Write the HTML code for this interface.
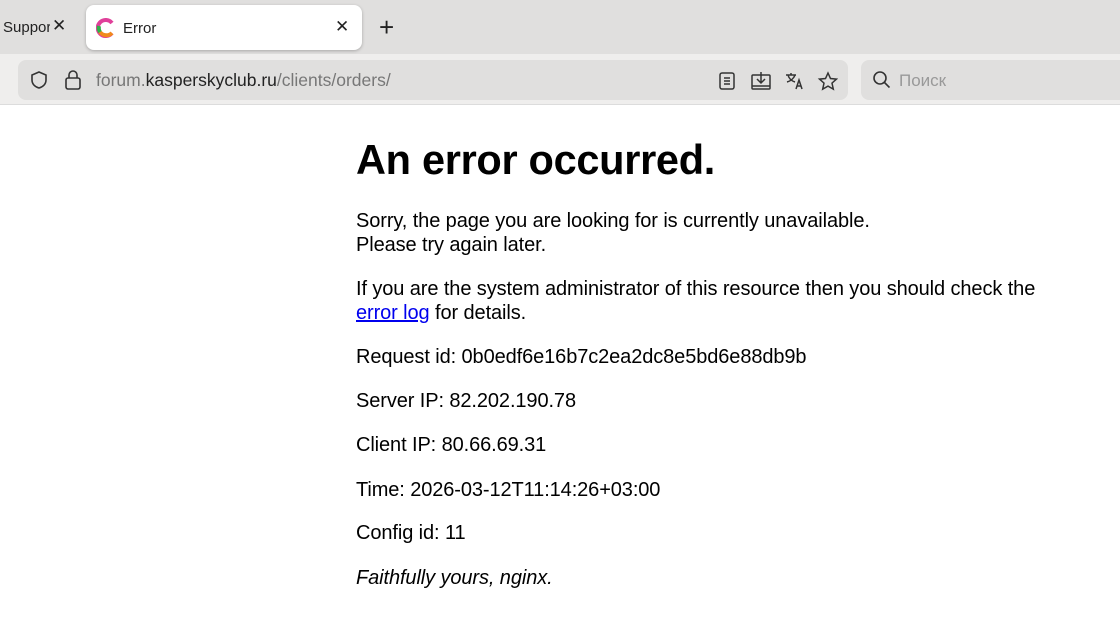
<!DOCTYPE html>
<html><head><meta charset="utf-8"><style>
body{margin:0;width:1120px;height:622px;overflow:hidden;background:#fff;font-family:"Liberation Sans",sans-serif;position:relative}
.tabbar{position:absolute;left:0;top:0;width:1120px;height:54px;background:#e0dfde}
.tool{position:absolute;left:0;top:54px;width:1120px;height:50px;background:#efeeed;border-bottom:1px solid #dcdcdc}
.url{position:absolute;left:18px;top:6px;width:830px;height:40px;background:#e0dfde;border-radius:8px}
.search{position:absolute;left:861px;top:6px;width:270px;height:40px;background:#e0dfde;border-radius:8px}
.tab{position:absolute;left:86px;top:5px;width:276px;height:45px;background:#fff;border-radius:8px;box-shadow:0 1px 3px rgba(0,0,0,.25)}
.c{position:absolute;left:356px;top:105px;color:#000}
h1{font-size:41.5px;margin:31px 0 0;font-weight:bold;letter-spacing:-.3px}
p{font-size:20px;margin:0;line-height:24px;position:absolute;left:0;white-space:nowrap;letter-spacing:-.1px}
a{color:#0000ee}
</style></head><body>
<div class="tabbar">
<div style="position:absolute;left:3px;top:19px;font-size:15px;color:#222;width:47px;overflow:hidden">Suppor</div>
<div style="position:absolute;left:52px;top:16px;font-size:17px;color:#222">✕</div>
<div class="tab">
<svg style="position:absolute;left:10px;top:13px" width="20" height="20" viewBox="0 0 20 20"><path d="M16 5A8 8 0 1 0 16 15" fill="none" stroke="#e0409a" stroke-width="4"/><path d="M4 14A8 8 0 0 0 16 15" fill="none" stroke="#f08a1c" stroke-width="4"/><path d="M3 8A8 8 0 0 0 4 14" fill="none" stroke="#2db34a" stroke-width="4"/></svg>
<div style="position:absolute;left:37px;top:15px;font-size:15px;color:#222">Error</div>
<div style="position:absolute;left:249px;top:12px;font-size:17px;color:#222">✕</div>
</div>
<div style="position:absolute;left:379px;top:12px;font-size:26px;color:#222;font-weight:300">+</div>
</div>
<div class="tool">
<div class="url">
<svg style="position:absolute;left:11px;top:10px" width="20" height="20" viewBox="0 0 20 20"><path d="M10 2L3 5v5c0 4 3 7 7 8 4-1 7-4 7-8V5z" fill="none" stroke="#333" stroke-width="1.6"/></svg>
<svg style="position:absolute;left:46px;top:9px" width="18" height="22" viewBox="0 0 18 22"><rect x="2" y="9" width="14" height="11" rx="2" fill="none" stroke="#333" stroke-width="1.6"/><path d="M5 9V6a4 4 0 0 1 8 0v3" fill="none" stroke="#333" stroke-width="1.6"/></svg>
<div style="position:absolute;left:78px;top:10px;font-size:17.5px;color:#777">forum.<span style="color:#222">kasperskyclub.ru</span>/clients/orders/</div>
<svg style="position:absolute;left:700px;top:11px" width="120" height="20" viewBox="0 0 120 20" fill="none" stroke="#333" stroke-width="1.5"><rect x="2" y="2" width="14" height="16" rx="2"/><path d="M6 7h6M6 10h6M6 13h6"/><rect x="34" y="4" width="18" height="14" rx="1"/><path d="M43 1v10M39 8l4 4 4-4M34 15h18"/><path d="M68 4h10M73 2v2M70 4c1 4 4 6 7 7M77 4c-1 3-4 6-8 7M78 18l3-9 3 9M79 15h4"/><path d="M110 2l2.5 5.5 6 .6-4.5 4 1.3 6-5.3-3-5.3 3 1.3-6-4.5-4 6-.6z"/></svg>
</div>
<div class="search">
<svg style="position:absolute;left:11px;top:10px" width="20" height="20" viewBox="0 0 20 20" fill="none" stroke="#333" stroke-width="1.6"><circle cx="8" cy="8" r="6"/><path d="M12.5 12.5l5 5"/></svg>
<div style="position:absolute;left:38px;top:11px;font-size:17px;color:#999">Поиск</div>
</div>
</div>
<div class="c">
<h1>An error occurred.</h1>
<p style="top:104px">Sorry, the page you are looking for is currently unavailable.<br>Please try again later.</p>
<p style="top:172px">If you are the system administrator of this resource then you should check the<br><a href="#">error log</a> for details.</p>
<p style="top:240px">Request id: 0b0edf6e16b7c2ea2dc8e5bd6e88db9b</p>
<p style="top:284px">Server IP: 82.202.190.78</p>
<p style="top:328px">Client IP: 80.66.69.31</p>
<p style="top:373px">Time: 2026-03-12T11:14:26+03:00</p>
<p style="top:416px">Config id: 11</p>
<p style="top:461px"><i>Faithfully yours, nginx.</i></p>
</div>
</body></html>
